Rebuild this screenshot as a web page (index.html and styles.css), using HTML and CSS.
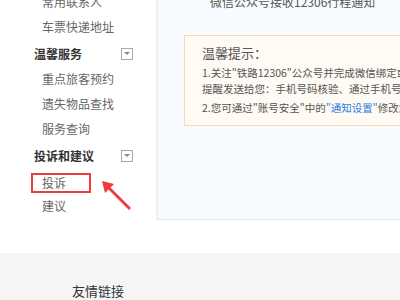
FILE: index.html
```html
<!DOCTYPE html>
<html lang="zh">
<head>
<meta charset="utf-8">
<link rel="stylesheet" href="styles.css">
</head>
<body>
<div class="main">
  <aside class="sidebar">
    <ul class="menu">
      <li class="item">常用联系人</li>
      <li class="item">车票快递地址</li>
      <li class="head"><span>温馨服务</span><i class="toggle"></i></li>
      <li class="item">重点旅客预约</li>
      <li class="item">遗失物品查找</li>
      <li class="item">服务查询</li>
      <li class="head"><span>投诉和建议</span><i class="toggle"></i></li>
      <li class="item active"><span class="hl">投诉</span></li>
      <li class="item">建议</li>
    </ul>
    <svg class="arrow" width="34" height="32" viewBox="0 0 34 32">
      <path d="M1 1 L13 4 L9.5 7.5 L30 28 L28 30 L7.5 9.5 L4 13 Z" fill="#f03a3a"/>
    </svg>
  </aside>
  <section class="panel">
    <div class="top-line"><span>微信公众号接收12306行程通知</span><span class="tail">是</span></div>
    <div class="notice">
      <div class="notice-title">温馨提示：</div>
      <p>1.关注"铁路12306"公众号并完成微信绑定或支付宝绑定后，我们将把</p>
      <p>提醒发送给您：手机号码核验、通过手机号码找回密码等</p>
      <p class="gap">2.您可通过"账号安全"中的<a>"通知设置"</a>修改您接收的提醒方式</p>
    </div>
  </section>
</div>
<footer class="footer">
  <div class="links-title">友情链接</div>
</footer>
</body>
</html>
```
FILE: styles.css
```css
html, body {
  margin: 0;
  padding: 0;
  width: 400px;
  height: 300px;
  overflow: hidden;
  background: #fff;
  font-family: "Noto Sans CJK SC", "Noto Sans", sans-serif;
}
.main {
  display: flex;
  height: 253px;
}
.sidebar {
  width: 157px;
  flex: none;
  position: relative;
}
.menu {
  list-style: none;
  margin: -11px 0 0 0;
  padding: 0;
}
.menu li {
  height: 25px;
  line-height: 25px;
  font-size: 12px;
}
.item {
  padding-left: 42px;
  color: #666;
}
.head {
  padding-left: 34px;
  padding-top: 2px;
  color: #333;
  font-weight: bold;
  display: flex;
  align-items: center;
  justify-content: space-between;
  padding-right: 24px;
}
.toggle {
  width: 10px;
  height: 10px;
  border: 1px solid #aaa;
  display: flex;
  align-items: center;
  justify-content: center;
}
.toggle::after {
  content: "";
  border-left: 3px solid transparent;
  border-right: 3px solid transparent;
  border-top: 3px solid #888;
}
.active {
  padding-left: 31px;
}
.hl {
  display: inline-block;
  height: 16px;
  line-height: 16px;
  border: 2px solid #ee3b3b;
  padding-left: 9px;
  box-sizing: content-box;
  width: 47px;
  vertical-align: middle;
}
.arrow {
  position: absolute;
  left: 101px;
  top: 180px;
}
.panel {
  flex: 1;
  height: 220px;
  background: #f7fbff;
  border-left: 1px solid #e6e9ee;
  border-bottom: 1px solid #e3e6ea;
  box-shadow: -1px 0 2px rgba(0,0,0,0.05);
  box-sizing: border-box;
  overflow: hidden;
}
.top-line {
  margin-top: -7px;
  height: 18px;
  line-height: 18px;
  font-size: 12px;
  color: #555;
  padding-left: 52px;
  display: flex;
  white-space: nowrap;
}
.tail {
  margin-left: 70px;
}
.notice {
  margin: 24px 0 0 26px;
  height: 91px;
  box-sizing: border-box;
  border: 1px solid #fbd8b0;
  border-right: none;
  background: #fffaf4;
  padding: 7px 0 0 17px;
  white-space: nowrap;
  color: #555;
}
.notice-title {
  font-size: 13px;
  line-height: 20px;
  margin-bottom: 2px;
}
.notice p {
  margin: 0;
  font-size: 10.5px;
  line-height: 16px;
}
.notice p.gap {
  margin-top: 3px;
}
.notice a {
  color: #2a7fe0;
}
.footer {
  height: 47px;
  background: #f5f5f5;
  padding-left: 72px;
  box-sizing: border-box;
  padding-top: 29px;
}
.links-title {
  font-size: 13px;
  color: #333;
  line-height: 18px;
}
```
